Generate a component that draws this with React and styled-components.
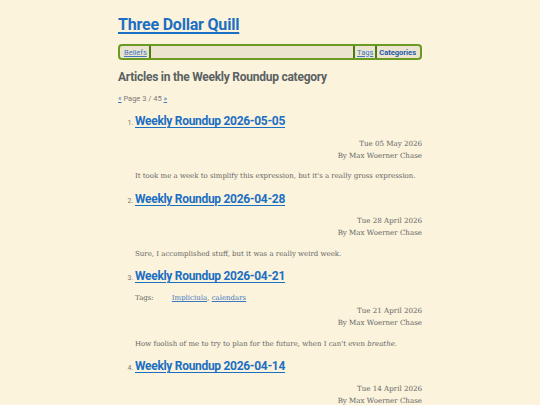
import React from 'react';
import styled, { createGlobalStyle } from 'styled-components';

const GlobalStyle = createGlobalStyle`
  html, body {
    margin: 0;
    padding: 0;
    background: #fbf3dc;
  }
  body {
    font-family: "DejaVu Serif", serif;
    color: #5f5f5f;
  }
`;

const headFont = 'Roboto, "Open Sans", sans-serif';

const articles = [
  {
    title: 'Weekly Roundup 2026-05-05',
    date: 'Tue 05 May 2026',
    summary: "It took me a week to simplify this expression, but it's a really gross expression.",
  },
  {
    title: 'Weekly Roundup 2026-04-28',
    date: 'Tue 28 April 2026',
    summary: 'Sure, I accomplished stuff, but it was a really weird week.',
  },
  {
    title: 'Weekly Roundup 2026-04-21',
    date: 'Tue 21 April 2026',
    tags: ['Impliciula', 'calendars'],
    summary: (
      <>
        How foolish of me to try to plan for the future, when I can't even <em>breathe</em>.
      </>
    ),
  },
  {
    title: 'Weekly Roundup 2026-04-14',
    date: 'Tue 14 April 2026',
  },
];

const App = () => (
  <>
    <GlobalStyle />
    <Page>
      <SiteTitle href="#">Three Dollar Quill</SiteTitle>
      <Nav>
        <NavLink href="#" side="right">Beliefs</NavLink>
        <Spacer />
        <NavLink href="#" side="left">Tags</NavLink>
        <NavLink href="#" side="left" current>Categories</NavLink>
      </Nav>
      <Heading>Articles in the Weekly Roundup category</Heading>
      <Pager>
        <a href="#">«</a> Page 3 / 45 <a href="#">»</a>
      </Pager>
      <ArticleList>
        {articles.map((a) => (
          <Item key={a.title}>
            <ArticleTitle href="#">{a.title}</ArticleTitle>
            {a.tags && (
              <Tags>
                <span>Tags:</span>
                <span>
                  {a.tags.map((t, i) => (
                    <React.Fragment key={t}>
                      {i > 0 && ', '}
                      <a href="#">{t}</a>
                    </React.Fragment>
                  ))}
                </span>
              </Tags>
            )}
            <Meta tight={!!a.tags}>
              <div>{a.date}</div>
              <div>By Max Woerner Chase</div>
            </Meta>
            {a.summary && <Summary>{a.summary}</Summary>}
          </Item>
        ))}
      </ArticleList>
    </Page>
  </>
);

const Page = styled.div`
  width: 304px;
  margin: 0 auto;
  padding-top: 14px;
`;

const SiteTitle = styled.a`
  display: inline-block;
  font-family: ${headFont};
  font-weight: 700;
  font-size: 16px;
  letter-spacing: -0.2px;
  line-height: 22px;
  color: #1b6fc3;
  text-decoration: underline;
  text-decoration-thickness: 1.5px;
  text-underline-offset: 2px;
`;

const Nav = styled.nav`
  display: flex;
  align-items: stretch;
  margin-top: 8px;
  height: 12px;
  border: 2px solid #6a9a22;
  border-radius: 4px;
  background: #ece4cf;
  padding: 0 2px;
`;

const NavLink = styled.a`
  display: flex;
  align-items: center;
  padding: 0 2px;
  font-family: ${headFont};
  font-size: 7.5px;
  font-weight: ${(p) => (p.current ? 700 : 400)};
  color: ${(p) => (p.current ? '#225aa8' : '#3d78c0')};
  text-decoration: ${(p) => (p.current ? 'none' : 'underline')};
  border-${(p) => p.side}: 2px solid #4d7a14;
`;

const Spacer = styled.div`
  flex: 1;
`;

const Heading = styled.h2`
  margin: 9px 0 0;
  font-family: ${headFont};
  font-weight: 700;
  font-size: 12px;
  letter-spacing: -0.25px;
  line-height: 16px;
  color: #5a6163;
`;

const Pager = styled.p`
  margin: 9px 0 0;
  font-family: ${headFont};
  font-size: 7.5px;
  line-height: 10px;
  color: #7b7b73;
  a {
    color: #3d78c0;
  }
`;

const ArticleList = styled.ol`
  margin: 8px 0 0;
  padding-left: 17px;
  font-size: 7px;
  color: #7a7a72;
`;

const Item = styled.li`
  &::marker {
    font-family: ${headFont};
    font-size: 7px;
  }
`;

const ArticleTitle = styled.a`
  display: inline-block;
  font-family: ${headFont};
  font-weight: 700;
  font-size: 12px;
  letter-spacing: -0.3px;
  line-height: 18px;
  color: #1b6fc3;
  text-decoration-thickness: 1.3px;
  text-underline-offset: 1.5px;
`;

const Tags = styled.div`
  display: flex;
  gap: 18px;
  margin-top: 8px;
  font-size: 7px;
  line-height: 10px;
  color: #666;
  a {
    color: #3d78c0;
  }
`;

const Meta = styled.div`
  margin-top: ${(p) => (p.tight ? '2px' : '7.5px')};
  text-align: right;
  font-size: 7.1px;
  line-height: 12px;
  color: #666;
`;

const Summary = styled.p`
  margin: 9.5px 0 7.5px;
  font-size: 7px;
  line-height: 11px;
  color: #666;
`;

export default App;
